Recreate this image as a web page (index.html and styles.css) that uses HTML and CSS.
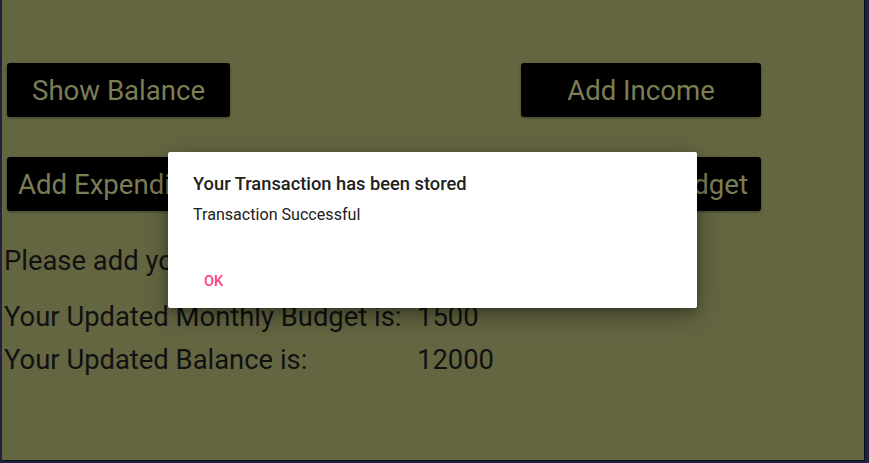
FILE: index.html
```html
<!DOCTYPE html>
<html>
<head>
<meta charset="utf-8">
<link rel="stylesheet" href="styles.css">
</head>
<body>
<div class="screen">
  <div class="actions">
    <button class="btn btn-left">Show Balance</button>
    <button class="btn btn-right">Add Income</button>
    <button class="btn btn-left btn-tight">Add Expenditure</button>
    <button class="btn btn-right btn-end">Set Budget</button>
  </div>
  <p class="prompt">Please add your Monthly Budget</p>
  <div class="summary">
    <span>Your Updated Monthly Budget is:</span><span>1500</span>
    <span>Your Updated Balance is:</span><span>12000</span>
  </div>
  <div class="dialog">
    <h2 class="dialog-title">Your Transaction has been stored</h2>
    <p class="dialog-body">Transaction Successful</p>
    <div class="dialog-actions">
      <button class="dialog-btn">OK</button>
    </div>
  </div>
</div>
</body>
</html>
```

FILE: styles.css
```css
html, body {
  margin: 0;
  padding: 0;
}
body {
  background: #1c2240;
  width: 869px;
  height: 463px;
  overflow: hidden;
  font-family: Roboto, "Liberation Sans", sans-serif;
}
.screen {
  position: relative;
  box-sizing: border-box;
  margin-left: 2px;
  width: 863px;
  height: 461px;
  background: #646642;
  border-right: 1px solid #0c0e14;
  border-bottom: 1px solid #0c0e14;
  padding: 63px 0 0 2px;
}
.actions {
  display: grid;
  grid-template-columns: 514px 240px;
  row-gap: 40px;
  padding-left: 3px;
}
.btn {
  justify-self: start;
  height: 54px;
  border: none;
  border-radius: 3px;
  background: #000;
  color: #7b7d54;
  font-family: Roboto, "Liberation Sans", sans-serif;
  font-size: 27.6px;
  padding: 0 25px;
  white-space: nowrap;
  overflow: hidden;
  box-shadow: 0 1px 3px rgba(0,0,0,0.35);
}
.btn-right {
  width: 240px;
  padding: 0;
}
.btn-tight {
  padding: 0 12px 0 11px;
}
.btn-end {
  text-align: right;
  padding: 0 13px 0 0;
}
.prompt {
  margin: 29px 0 0;
  font-size: 27.4px;
  line-height: 43px;
  color: #111;
}
.summary {
  margin-top: 13px;
  display: grid;
  grid-template-columns: 413px auto;
  font-size: 27.4px;
  line-height: 43px;
  color: #111;
}
.dialog {
  position: absolute;
  left: 166px;
  top: 152px;
  width: 529px;
  height: 156px;
  box-sizing: border-box;
  background: #fff;
  border-radius: 2px;
  box-shadow: 0 8px 24px rgba(0,0,0,0.35), 0 3px 8px rgba(0,0,0,0.2);
  padding: 22px 25px 0;
}
.dialog-title {
  margin: 0;
  font-size: 18.3px;
  font-weight: 500;
  line-height: 20px;
  color: #212121;
}
.dialog-body {
  margin: 11px 0 0;
  font-size: 16.1px;
  line-height: 20px;
  color: #212121;
}
.dialog-actions {
  margin-top: 49px;
  display: flex;
}
.dialog-btn {
  border: none;
  background: transparent;
  padding: 0 0 0 11px;
  font-family: Roboto, "Liberation Sans", sans-serif;
  font-size: 14.5px;
  font-weight: 500;
  line-height: 16px;
  color: #ff4081;
}
```
